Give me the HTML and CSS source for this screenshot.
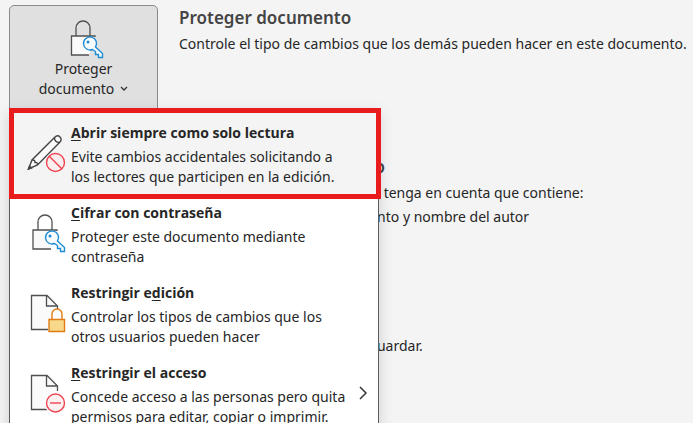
FILE: index.html
```
<!DOCTYPE html>
<html lang="es">
<head>
  <meta charset="UTF-8">
  <meta name="viewport" content="width=device-width, initial-scale=1.0">
  <title>Proteger documento</title>
  <link rel="stylesheet" href="styles.css">
</head>
<body>
  <main class="info">
    <!-- Botón y menú desplegable -->
    <div class="protect">
      <button class="protect-button" type="button" aria-haspopup="menu" aria-expanded="true">
        <svg class="icon" width="36" height="40" viewBox="0 0 36 40" fill="none">
          <path d="M10 17V9a7 7 0 0 1 14 0v8" stroke="#505050" stroke-width="1.300"/>
          <path d="M29 18V17H5.500V36H23" fill="#fafafa" stroke="#505050" stroke-width="1.300"/>
          <path d="M29.500 28l7 6.500v4h-4v-3h-3v-3l-3-2a6.500 6.500 0 1 1 3-2.500z" fill="#f8fbfe" stroke="#1e8bd4" stroke-width="1.400"/>
          <circle cx="22" cy="23" r="1.500" fill="#1e8bd4"/>
        </svg>
        <span>Proteger</span>
        <span class="button-line">documento
          <svg width="8" height="6" viewBox="0 0 8 6" fill="none"><path d="M1 1l3 3 3-3" stroke="#333" stroke-width="1.300"/></svg>
        </span>
      </button>

      <div class="menu" role="menu">
        <button class="menu-item selected" type="button" role="menuitem">
          <svg class="icon" width="40" height="40" viewBox="0 0 40 40" fill="none">
            <path d="M2.500 36L6 27 28.500 4.500q3-3 5.500-.5t-.5 5.500L11.500 32z" fill="#fafafa" stroke="#454545" stroke-width="1.400"/>
            <path d="M6 27q3-.5 3 2.500 3-.5 2.500 2.500M28.500 4.500q0 5 5 5M2.500 36l3-1-2-2z" stroke="#454545" stroke-width="1.400"/>
            <circle cx="29.500" cy="29.500" r="10.500" fill="#f4f4f4"/>
            <circle cx="29.500" cy="29.500" r="9" fill="#fbeeee" stroke="#ee4350" stroke-width="1.400"/>
            <path d="M23 23l13 13" stroke="#ee4350" stroke-width="1.400"/>
          </svg>
          <span class="item-text">
            <strong><u>A</u>brir siempre como solo lectura</strong>
            <span>Evite cambios accidentales solicitando a<br>los lectores que participen en la edición.</span>
          </span>
        </button>
        <button class="menu-item" type="button" role="menuitem">
          <svg class="icon" width="40" height="40" viewBox="0 0 40 40" fill="none">
            <path d="M12 17V9a7 7 0 0 1 14 0v8" stroke="#505050" stroke-width="1.300"/>
            <path d="M31 18V17H7V36H25" fill="#fafafa" stroke="#505050" stroke-width="1.300"/>
            <path d="M31.500 28l7 6.500v4h-4v-3h-3v-3l-3-2a6.500 6.500 0 1 1 3-2.500z" fill="#f8fbfe" stroke="#1e8bd4" stroke-width="1.400"/>
            <circle cx="24" cy="23" r="1.500" fill="#1e8bd4"/>
          </svg>
          <span class="item-text">
            <strong><u>C</u>ifrar con contraseña</strong>
            <span>Proteger este documento mediante<br>contraseña</span>
          </span>
        </button>
        <button class="menu-item" type="button" role="menuitem">
          <svg class="icon" width="40" height="40" viewBox="0 0 40 40" fill="none">
            <path d="M6 2h15l10 11v23H6z" fill="#fafafa"/>
            <path d="M22 36.500H5.500V2.500H21L31.500 13V17M20.500 2.500V13H31.500" stroke="#505050" stroke-width="1.300"/>
            <path d="M22 28H40V40H22z" fill="#fff"/>
            <path d="M26 27v-6a5 5 0 0 1 10 0v6" fill="#fff" stroke="#e07c12" stroke-width="1.400"/>
            <path d="M23 26.500h15.500v12H23z" fill="#f8d98b" stroke="#e07c12" stroke-width="1.400"/>
          </svg>
          <span class="item-text">
            <strong>Restringir e<u>d</u>ición</strong>
            <span>Controlar los tipos de cambios que los<br>otros usuarios pueden hacer</span>
          </span>
        </button>
        <button class="menu-item" type="button" role="menuitem">
          <svg class="icon" width="40" height="40" viewBox="0 0 40 40" fill="none">
            <path d="M6 2h15l10 11v23H6z" fill="#fafafa"/>
            <path d="M22 36.500H5.500V2.500H21L31.500 13V18M20.500 2.500V13H31.500" stroke="#505050" stroke-width="1.300"/>
            <circle cx="29.500" cy="30" r="11" fill="#fff"/>
            <circle cx="29.500" cy="30" r="9" fill="#fbf1f1" stroke="#ee4350" stroke-width="1.400"/>
            <path d="M24 30h11" stroke="#ee4350" stroke-width="1.400"/>
          </svg>
          <span class="item-text">
            <strong><u>R</u>estringir el acceso</strong>
            <span>Concede acceso a las personas pero quita<br>permisos para editar, copiar o imprimir.</span>
          </span>
          <svg class="submenu-arrow" width="8" height="14" viewBox="0 0 8 14" fill="none"><path d="M1 1l6 6-6 6" stroke="#333" stroke-width="1.500"/></svg>
        </button>
      </div>
    </div>

    <!-- Información del documento -->
    <div class="details">
      <section>
        <h2>Proteger documento</h2>
        <p>Controle el tipo de cambios que los demás pueden hacer en este documento.</p>
      </section>
      <section class="inspect">
        <h2>Inspeccionar documento</h2>
        <p>Antes de publicar este archivo, tenga en cuenta que contiene:</p>
        <ul>
          <li>Propiedades del documento y nombre del autor</li>
        </ul>
      </section>
      <section class="manage">
        <p>No hay cambios sin guardar.</p>
      </section>
    </div>
  </main>
</body>
</html>
```
FILE: styles.css
```
* {
  box-sizing: border-box;
}
body {
  margin: 0;
  height: 100vh;
  overflow: hidden;
  background-color: #f4f4f4;
  color: #262626;
  font-family: "Noto Sans", "Open Sans", sans-serif;
  font-size: 14px;
  line-height: 20px;
}
button {
  font: inherit;
  color: inherit;
  cursor: pointer;
}
.info {
  display: flex;
  gap: 21px;
  padding: 5px 0 0 9px;
}
.icon {
  flex-shrink: 0;
  overflow: visible;
}

/* Botón y menú */
.protect {
  position: relative;
  flex: 0 0 149px;
}
.protect-button {
  display: flex;
  flex-direction: column;
  align-items: center;
  width: 100%;
  height: 112px;
  padding: 13px 0 0;
  background-color: #e0e0e0;
  border: 1px solid #8a8a8a;
  border-radius: 5px;
}
.button-line {
  display: flex;
  align-items: center;
  gap: 6px;
}
.menu {
  position: absolute;
  top: 104px;
  left: 0;
  width: 370px;
  background-color: #fff;
  border: 1px solid #5c5c5c;
  box-shadow: 0 4px 14px rgba(0, 0, 0, 0.15);
}
.menu-item {
  display: flex;
  align-items: flex-start;
  gap: 5px;
  width: 100%;
  height: 80px;
  padding: 8px 11px 0 16px;
  background: none;
  border: none;
  text-align: left;
}
.menu-item .icon {
  margin-top: 10px;
}
.menu-item.selected {
  position: relative;
  height: 85px;
  padding-top: 13px;
  background-color: #f4f4f4;
}
/* Marco rojo de la opción destacada */
.menu-item.selected::after {
  content: "";
  position: absolute;
  inset: -2px -3px -4px -1px;
  border: 5px solid #e81c1c;
}
.item-text {
  flex: 1;
  white-space: nowrap;
}
.item-text strong {
  display: block;
  margin-bottom: 4px;
  font-family: "Open Sans", sans-serif;
}
.item-text u {
  text-underline-offset: 2px;
}
.submenu-arrow {
  margin-top: 23px;
}

/* Información */
.details {
  flex: 1;
  white-space: nowrap;
}
.details h2 {
  margin: 0;
  font-size: 17px;
  font-weight: 600;
  line-height: 26px;
  color: #444;
}
.details p {
  margin: 0;
  line-height: 26px;
}
.inspect {
  margin-top: 97px;
}
.inspect ul {
  margin: 0;
  padding-left: 35px;
  line-height: 22px;
}
.manage {
  margin-top: 105px;
  padding-left: 58px;
}
```
